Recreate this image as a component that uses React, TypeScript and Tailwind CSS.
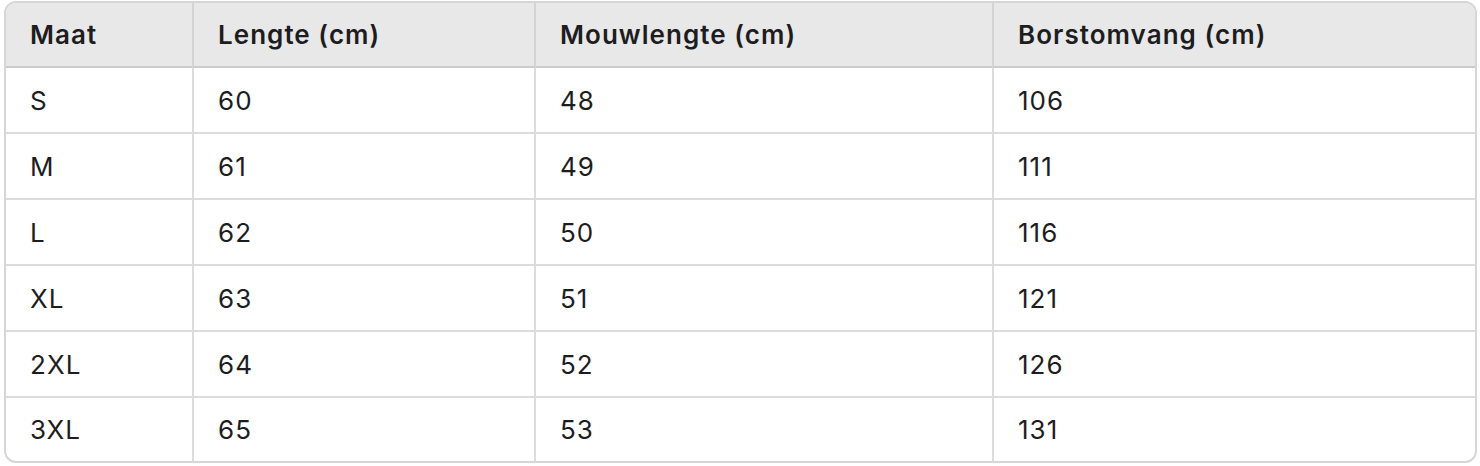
import React from 'react';

const headers = ['Maat', 'Lengte (cm)', 'Mouwlengte (cm)', 'Borstomvang (cm)'];

const rows: [string, number, number, number][] = [
  ['S', 60, 48, 106],
  ['M', 61, 49, 111],
  ['L', 62, 50, 116],
  ['XL', 63, 51, 121],
  ['2XL', 64, 52, 126],
  ['3XL', 65, 53, 131],
];

const colWidths = ['w-[187px]', 'w-[342px]', 'w-[458px]', ''];

const App: React.FC = () => {
  return (
    <div className="bg-white min-h-screen pt-[1px] pl-[4px] pr-[3px]" style={{ fontFamily: 'Inter, "Noto Sans", sans-serif' }}>
      <div className="border-2 border-[#d6d6d6] rounded-[12px] overflow-hidden">
        <table className="w-full border-collapse text-left">
          <thead>
            <tr className="bg-[#e8e8e8] border-b-2 border-[#cbcbcb]">
              {headers.map((h, i) => (
                <th
                  key={h}
                  className={`${colWidths[i]} h-[64px] px-[24px] text-[26px] tracking-[0.04em] font-semibold text-[#1d1d1f] ${i > 0 ? 'border-l-2 border-[#d3d3d3]' : ''}`}
                >
                  {h}
                </th>
              ))}
            </tr>
          </thead>
          <tbody>
            {rows.map((r, ri) => {
              const last = ri === rows.length - 1;
              return (
                <tr key={r[0]} className={last ? '' : 'border-b-2 border-[#dcdcdc]'}>
                  {r.map((c, i) => (
                    <td
                      key={i}
                      className={`${last ? 'h-[64px]' : 'h-[66px]'} px-[24px] text-[26px] tracking-[0.04em] font-normal text-[#1d1d1f] ${i > 0 ? 'border-l-2 border-[#dcdcdc]' : ''}`}
                    >
                      {c}
                    </td>
                  ))}
                </tr>
              );
            })}
          </tbody>
        </table>
      </div>
    </div>
  );
};

export default App;
